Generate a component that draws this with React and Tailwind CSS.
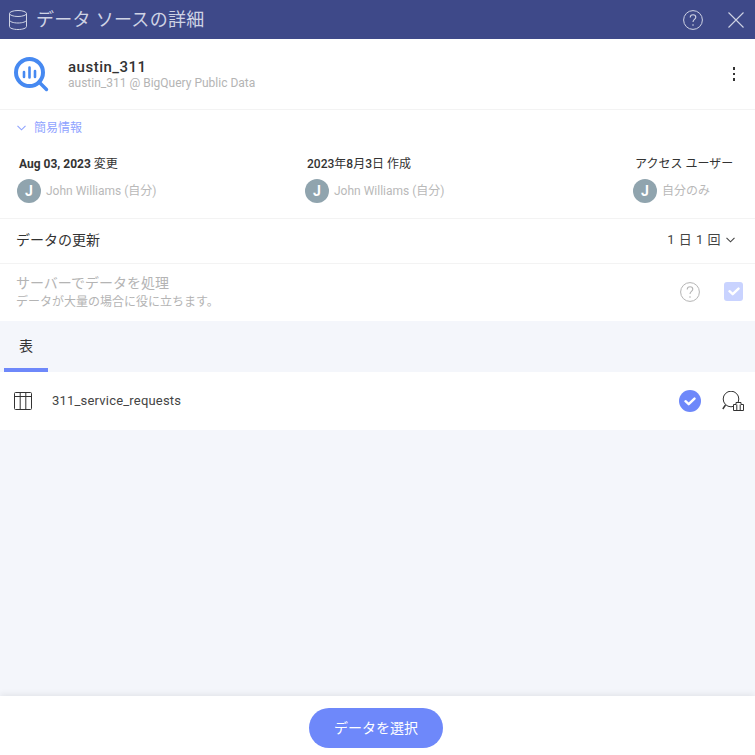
import React from 'react';

const FONT = "font-['Roboto','Noto_Sans_CJK_JP',sans-serif]";

function BigQueryLogo() {
  return (
    <svg width="36" height="36" viewBox="0 0 36 36" fill="none">
      <circle cx="16.5" cy="16.5" r="13.5" stroke="#4689f1" strokeWidth="4" />
      <path d="M26 26l7.5 7.5" stroke="#4689f1" strokeWidth="3.4" strokeLinecap="round" />
      <path d="M11 16v5M16.5 11.5v10M22 15v6" stroke="#4689f1" strokeWidth="2.6" strokeLinecap="round" />
    </svg>
  );
}

function DatabaseIcon() {
  return (
    <svg width="18" height="20" viewBox="0 0 18 20" fill="none" stroke="#cfd3e4" strokeWidth="1">
      <ellipse cx="9" cy="3.5" rx="8.5" ry="3" />
      <path d="M0.5 3.5v13c0 1.7 3.8 3 8.5 3s8.5-1.3 8.5-3v-13" />
      <path d="M0.5 10c0 1.7 3.8 3 8.5 3s8.5-1.3 8.5-3" />
    </svg>
  );
}

function CloseIcon() {
  return (
    <svg width="16" height="16" viewBox="0 0 16 16" fill="none" stroke="#cfd3e4" strokeWidth="1.1">
      <path d="M0.5 0.5l15 15M15.5 0.5l-15 15" />
    </svg>
  );
}

function HelpIcon({ color }) {
  return (
    <svg width="20" height="20" viewBox="0 0 20 20" fill="none">
      <circle cx="10" cy="10" r="9.4" stroke={color} strokeWidth="1" />
      <path d="M7.2 7.6c0-1.7 1.3-2.8 2.9-2.8s2.7 1.1 2.7 2.4c0 2.2-2.8 2.3-2.8 4.8" stroke={color} strokeWidth="1.1" fill="none" />
      <circle cx="10" cy="15" r="0.8" fill={color} />
    </svg>
  );
}

function Chevron({ color }) {
  return (
    <svg width="9" height="6" viewBox="0 0 9 6" fill="none" stroke={color} strokeWidth="1.1">
      <path d="M0.5 0.8l4 4 4-4" />
    </svg>
  );
}

function Tick() {
  return (
    <svg width="12" height="9" viewBox="0 0 12 9" fill="none" stroke="#fff" strokeWidth="2.4" strokeLinecap="round" strokeLinejoin="round">
      <path d="M1.5 4.2l3.2 3 5.8-5.6" />
    </svg>
  );
}

function Person({ name }) {
  return (
    <div className="flex items-center gap-[5px] h-6">
      <div className="w-6 h-6 rounded-full bg-[#90a4ae] text-white text-[14px] font-bold flex items-center justify-center">J</div>
      <span className="text-[12px] text-[#b9b9b9]">{name}</span>
    </div>
  );
}

function TableIcon() {
  return (
    <svg width="18" height="18" viewBox="0 0 18 18" fill="none" stroke="#333" strokeWidth="1">
      <rect x="0.5" y="0.5" width="17" height="17" rx="1" />
      <path d="M0.5 4.5h17M6.2 0.5v17M11.8 0.5v17" />
    </svg>
  );
}

function SearchChartIcon() {
  return (
    <svg width="22" height="21" viewBox="0 0 22 21" fill="none" stroke="#333" strokeWidth="1">
      <circle cx="9" cy="8" r="7.8" />
      <path d="M3.5 14L0.8 18" strokeWidth="1.4" />
      <path d="M11.5 19.5v-6h2.5v-2h5v2h2.5v6zM14.8 13.5v6M18.2 13.5v6" fill="#fff" />
    </svg>
  );
}

export default function App() {
  return (
    <div className={`w-[755px] h-[755px] flex flex-col bg-[#f4f6fb] overflow-hidden ${FONT}`}>
      {/* Title bar */}
      <div className="h-[39px] shrink-0 bg-[#3e4989] flex items-center pl-[9px] pr-[11px]">
        <DatabaseIcon />
        <span className="ml-[9px] text-[18px] text-[#cfd3e4] tracking-[0.3px]">データ ソースの詳細</span>
        <div className="ml-auto flex items-center gap-[25px]">
          <HelpIcon color="#cfd3e4" />
          <CloseIcon />
        </div>
      </div>

      {/* Source name */}
      <div className="h-[71px] shrink-0 bg-white border-b border-[#f3f3f3] flex items-center pl-[13px] pr-[20px]">
        <BigQueryLogo />
        <div className="ml-[19px] flex flex-col">
          <span className="text-[15px] leading-[18px] font-medium text-[#333] tracking-[0.5px]">austin_311</span>
          <span className="text-[12px] leading-[15px] text-[#b4b4b4]">austin_311 @ BigQuery Public Data</span>
        </div>
        <div className="ml-auto flex flex-col gap-[3px]">
          <div className="w-[2.5px] h-[2.5px] bg-[#333]" />
          <div className="w-[2.5px] h-[2.5px] bg-[#333]" />
          <div className="w-[2.5px] h-[2.5px] bg-[#333]" />
        </div>
      </div>

      {/* Quick info */}
      <div className="h-[109px] shrink-0 bg-white border-b border-[#f3f3f3] pt-[9px] pl-[17px] pr-[21px]">
        <div className="flex items-center h-[17px] gap-[8px] text-[#8fa3ff]">
          <Chevron color="#8fa3ff" />
          <span className="text-[12px]">簡易情報</span>
        </div>
        <div className="flex mt-[19px]">
          <div className="w-[288px] flex flex-col gap-[6px]">
            <span className="ml-[2px] text-[12px] leading-[18px] text-[#333]"><span className="font-bold">Aug 03, 2023</span> 変更</span>
            <Person name="John Williams (自分)" />
          </div>
          <div className="w-[328px] flex flex-col gap-[6px]">
            <span className="ml-[2px] text-[12px] leading-[18px] text-[#333]">
              <span className="font-medium">2023</span>年<span className="font-medium">8</span>月<span className="font-medium">3</span>日 作成
            </span>
            <Person name="John Williams (自分)" />
          </div>
          <div className="flex flex-col gap-[6px]">
            <span className="ml-[2px] text-[12px] leading-[18px] text-[#333]">アクセス ユーザー</span>
            <Person name="自分のみ" />
          </div>
        </div>
      </div>

      {/* Refresh */}
      <div className="h-[45px] shrink-0 bg-white border-b border-[#f3f3f3] flex items-center pl-[16px] pr-[20px] pb-[2px]">
        <span className="text-[14px] text-[#333]">データの更新</span>
        <span className="ml-auto text-[13px] text-[#444] tracking-[0.5px]">1 日 1 回</span>
        <span className="ml-[5px]"><Chevron color="#444" /></span>
      </div>

      {/* Server processing */}
      <div className="h-[57px] shrink-0 bg-white flex items-center pl-[16px] pr-[12px] pb-[2px]">
        <div className="flex flex-col gap-[1px]">
          <span className="text-[14px] leading-[20px] text-[#b4b4b4]">サーバーでデータを処理</span>
          <span className="text-[12px] leading-[16px] text-[#b4b4b4]">データが大量の場合に役に立ちます。</span>
        </div>
        <div className="ml-auto flex items-center gap-[24px]">
          <HelpIcon color="#b4b4b4" />
          <div className="w-[19px] h-[19px] rounded-[3px] bg-[#c9d3ff] flex items-center justify-center">
            <Tick />
          </div>
        </div>
      </div>

      {/* Tabs */}
      <div className="h-[51px] shrink-0 pl-[4px] flex">
        <div className="w-[44px] h-full pt-[3px] flex items-center justify-center border-b-[4px] border-[#6e88fa] text-[14px] text-[#333]">表</div>
      </div>

      {/* Table row */}
      <div className="h-[58px] shrink-0 bg-white flex items-center pl-[14px] pr-[11px]">
        <TableIcon />
        <span className="ml-[20px] text-[13px] text-[#444] tracking-[0.2px]">311_service_requests</span>
        <div className="ml-auto flex items-center gap-[21px]">
          <div className="w-[22px] h-[22px] rounded-full bg-[#6e88fa] flex items-center justify-center">
            <Tick />
          </div>
          <SearchChartIcon />
        </div>
      </div>

      <div className="flex-1" />

      {/* Footer */}
      <div className="h-[59px] shrink-0 bg-white shadow-[0_-2px_6px_rgba(0,0,0,0.07)] flex justify-center items-start pt-[12px] pr-[3px]">
        <button className="w-[134px] h-[40px] rounded-full bg-[#6e88fa] text-white text-[14px]">データを選択</button>
      </div>
    </div>
  );
}
